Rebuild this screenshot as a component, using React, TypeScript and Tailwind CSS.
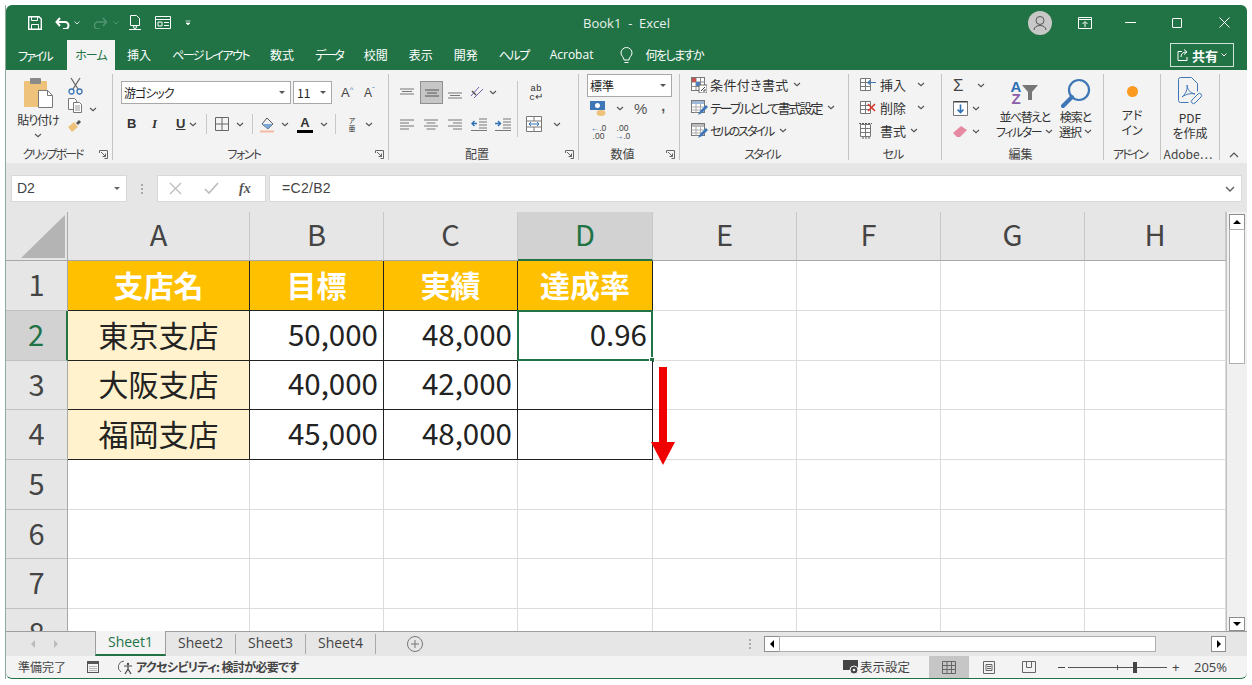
import type { ReactNode } from "react";

const JP = "font-['Noto_Sans_CJK_JP','Noto_Sans',sans-serif]";
const PALT = "[font-feature-settings:'palt']";

const Chev = ({ className = "" }: { className?: string }) => (
  <svg width="8" height="5" viewBox="0 0 8 5" className={`shrink-0 ${className}`}>
    <path d="M1 1l3 2.600L7 1" fill="none" stroke="#555" strokeWidth="1.200" />
  </svg>
);

const Launcher = () => (
  <svg width="9" height="9" viewBox="0 0 9 9" className="shrink-0">
    <path d="M.5 3V.5H8.500V8.500H5.500M2 2l4.500 4.500M6.500 3.500v3h-3" fill="none" stroke="#666" strokeWidth="1" />
  </svg>
);

function Group({
  w,
  label,
  labelClass = "",
  launcher,
  children,
}: {
  w: string;
  label: string;
  labelClass?: string;
  launcher?: boolean;
  children: ReactNode;
}) {
  return (
    <div className={`${w} shrink-0 mt-[4px] mb-[3px] border-r border-[#c4c4c4] flex flex-col`}>
      <div className="h-[72px] shrink-0">{children}</div>
      <div className="h-[14px] mt-[2px] flex items-center pr-[4px]">
        <div className={`flex-1 text-center text-[12px] leading-none text-[#444] whitespace-nowrap ${labelClass}`}>{label}</div>
        {launcher && <Launcher />}
      </div>
    </div>
  );
}

// lines for the alignment buttons
const Lines = ({ d, color = "#777" }: { d: string; color?: string }) => (
  <svg width="16" height="14" viewBox="0 0 16 14" className="shrink-0">
    <path d={d} fill="none" stroke={color} strokeWidth="1" />
  </svg>
);

const SmallIcon = ({ kind }: { kind: string }) => {
  if (kind === "cond")
    return (
      <svg width="16" height="16" viewBox="0 0 16 16" className="shrink-0">
        <rect x=".5" y=".5" width="13" height="13" fill="#fff" stroke="#777" />
        <path d="M5 .5v13M9.500 .5v13M.5 5h13M.5 9.500h13" stroke="#888" />
        <rect x="1" y="1" width="4" height="4" fill="#c8524f" />
        <rect x="5" y="5" width="4" height="4" fill="#4a7fc1" />
        <rect x="8" y="8" width="8" height="8" fill="#fff" stroke="#666" />
        <path d="M10 14l4-4M12 14h2v-2" stroke="#444" fill="none" />
      </svg>
    );
  if (kind === "table" || kind === "cell")
    return (
      <svg width="17" height="16" viewBox="0 0 17 16" className="shrink-0">
        <rect x=".5" y=".5" width="13" height="12" fill="#fff" stroke="#777" />
        <rect x="1" y="1" width="12" height="3" fill={kind === "table" ? "#9db7d8" : "#bbb"} />
        <path d="M.5 7h13M.5 10h13M5 4v9M9.500 4v9" stroke="#aaa" />
        <path d="M7 15l2-4 6-6 2 2-6 6z" fill="#3f76b5" />
      </svg>
    );
  if (kind === "ins" || kind === "del" || kind === "fmt")
    return (
      <svg width="17" height="16" viewBox="0 0 17 16" className="shrink-0">
        <path d="M1.500 1.500h10v12h-10zM1.500 5.500h10M1.500 9.500h10M6.500 1.500v12" fill="#fff" stroke="#777" />
        {kind === "ins" && <path d="M9 5.500h8M11 3.500l-2 2 2 2" fill="none" stroke="#3f76b5" strokeWidth="1.200" />}
        {kind === "del" && <path d="M9 4l7 7M16 4l-7 7" stroke="#d9342b" strokeWidth="1.600" />}
        {kind === "fmt" && <path d="M0 .5h13M3 15h8" stroke="#555" strokeDasharray="2 1" />}
      </svg>
    );
  return null;
};

function Ribbon() {
  const textRow = "flex items-center h-[23px] text-[13px] leading-none text-[#333] whitespace-nowrap";
  return (
    <div className={`h-[93px] bg-[#f3f3f3] flex shrink-0 ${PALT}`}>
      {/* clipboard */}
      <Group w="w-[107px]" label="クリップボード" labelClass="tracking-[-2px]" launcher>
        <div className="flex pl-[10px] h-full">
          <div className="w-[44px] flex flex-col items-center">
            <svg width="32" height="32" viewBox="0 0 32 32" className="mt-[3px] ml-[2px]">
              <rect x="1" y="4" width="23" height="26" rx="1" fill="#eec27a" />
              <rect x="7" y="1" width="11" height="6" rx="1" fill="#8a8a8a" />
              <path d="M15.500 13.500h9l5 5v12h-14z" fill="#fff" stroke="#777" />
              <path d="M24.500 13.500v5h5" fill="none" stroke="#777" />
            </svg>
            <div className="text-[12px] tracking-[-1px] leading-none mt-[5px] text-[#333] whitespace-nowrap">貼り付け</div>
            <Chev className="mt-[7px]" />
          </div>
          <div className="flex flex-col items-center w-[20px] ml-[5px]">
            <svg width="15" height="18" viewBox="0 0 15 18" className="mt-[3px]">
              <path d="M3 1l7 11M12 1L5 12" stroke="#666" strokeWidth="1.300" />
              <circle cx="3.500" cy="14.500" r="2.500" fill="none" stroke="#3f76b5" strokeWidth="1.300" />
              <circle cx="11.500" cy="14.500" r="2.500" fill="none" stroke="#3f76b5" strokeWidth="1.300" />
            </svg>
            <svg width="14" height="15" viewBox="0 0 14 15" className="mt-[3px]">
              <path d="M.5.5h6l2 2v9h-8z" fill="#fff" stroke="#777" />
              <path d="M5.500 4.500h6l2 2v8h-8z" fill="#fff" stroke="#777" />
              <path d="M7 8h5M7 10h5M7 12h5" stroke="#999" />
            </svg>
            <svg width="16" height="13" viewBox="0 0 16 13" className="mt-[6px]">
              <path d="M1 8l6-5 4 5-6 5z" fill="#eec27a" />
              <path d="M9 4l3-3 2 2-3 3z" fill="#555" />
            </svg>
          </div>
          <Chev className="ml-[4px] mt-[33px]" />
        </div>
      </Group>

      {/* font */}
      <Group w="w-[276px]" label="フォント" labelClass="tracking-[-1.500px]" launcher>
        <div className="pl-[8px] pt-[7px]">
          <div className="flex items-center">
            <div className="w-[170px] h-[23px] bg-white border border-[#a8a8a8] flex items-center justify-between pl-[2px] pr-[5px] text-[12px] tracking-[-1px] text-[#222]">
              游ゴシック
              <span className="w-0 h-0 border-x-[3px] border-x-transparent border-t-[3px] border-t-[#555]" />
            </div>
            <div className="ml-[2px] w-[39px] h-[23px] bg-white border border-[#a8a8a8] flex items-center justify-between pl-[3px] pr-[5px] text-[12px] text-[#222]">
              11
              <span className="w-0 h-0 border-x-[3px] border-x-transparent border-t-[3px] border-t-[#555]" />
            </div>
            <span className="ml-[9px] w-[14px] text-[13px] font-['Liberation_Sans'] text-[#444] relative">
              A<sup className="text-[8px] text-[#3f76b5] -top-[5px]">^</sup>
            </span>
            <span className="ml-[9px] w-[14px] text-[12px] font-['Liberation_Sans'] text-[#444]">
              A<sup className="text-[8px] text-[#3f76b5] -top-[5px]">ˇ</sup>
            </span>
          </div>
          <div className="flex items-center h-[24px] mt-[8px] font-['Liberation_Sans'] text-[#333] text-[13px]">
            <span className="w-[10px] ml-[6px] font-bold">B</span>
            <span className="w-[10px] ml-[15px] italic font-bold font-['Liberation_Serif']">I</span>
            <span className="w-[10px] ml-[14px] font-bold underline">U</span>
            <Chev className="ml-[3px]" />
            <div className="w-px h-[20px] bg-[#c8c8c8] ml-[9px]" />
            <svg width="14" height="14" viewBox="0 0 14 14" className="ml-[8px]">
              <path d="M.5.5h13v13H.5zM7 .5v13M.5 7h13" fill="none" stroke="#666" />
            </svg>
            <Chev className="ml-[7px]" />
            <div className="w-px h-[20px] bg-[#c8c8c8] ml-[8px]" />
            <svg width="16" height="17" viewBox="0 0 16 17" className="ml-[7px]">
              <path d="M7 2l6 6-5 5-6-5z" fill="none" stroke="#555" />
              <path d="M2 8h11l-5 5z" fill="#7aa7d6" />
              <rect x="0" y="14.500" width="14" height="2" fill="#f6b9a4" />
            </svg>
            <Chev className="ml-[5px]" />
            <div className="w-[16px] ml-[8px] flex flex-col items-center leading-none">
              <span className="text-[13px] leading-[13px] font-bold">A</span>
              <span className="w-[16px] h-[3px] bg-black mt-[1px]" />
            </div>
            <Chev className="ml-[7px]" />
            <div className="w-px h-[20px] bg-[#c8c8c8] ml-[7px]" />
            <span className={`ml-[11px] w-[10px] text-[7px] leading-[8px] text-center ${JP}`}>ア<br />亜</span>
            <Chev className="ml-[8px]" />
          </div>
        </div>
      </Group>

      {/* alignment */}
      <Group w="w-[190px]" label="配置" launcher>
        <div className="flex pt-[7px] pl-[10px]">
          <div className="w-[118px]">
            <div className="flex items-center h-[23px]">
              <Lines d="M1 3h14M3 5.500h10M1 8h14" />
              <div className="ml-[5px] w-[23px] h-[23px] bg-[#c6c6c6] border border-[#8f8f8f] flex items-center justify-center">
                <Lines d="M1 4h14M3 7h10M1 10h14" color="#555" />
              </div>
              <div className="ml-[4px]"><Lines d="M1 7h14M3 9.500h10M1 12h14" /></div>
              <svg width="16" height="15" viewBox="0 0 16 15" className="ml-[6px]">
                <path d="M2 11l8-9M5 13l9-9" stroke="#7a5fa8" strokeWidth="1" />
                <path d="M3 6l4 4" stroke="#555" strokeWidth="1.500" />
              </svg>
              <Chev className="ml-[4px]" />
            </div>
            <div className="flex items-center h-[24px] mt-[8px] gap-[8px]">
              <Lines d="M1 3h14M1 6h9M1 9h14M1 12h9" />
              <Lines d="M1 3h14M3.500 6h9M1 9h14M3.500 12h9" />
              <Lines d="M1 3h14M6 6h9M1 9h14M6 12h9" />
              <svg width="16" height="14" viewBox="0 0 16 14"><path d="M8 2h8M8 5h8M8 8h8M8 11h8M0 13.500h16" stroke="#777" /><path d="M6 6.500H1M3.500 4l-2.500 2.500L3.500 9" fill="none" stroke="#2f6fb5" strokeWidth="1.400" /></svg>
              <svg width="16" height="14" viewBox="0 0 16 14"><path d="M8 2h8M8 5h8M8 8h8M8 11h8M0 13.500h16" stroke="#777" /><path d="M0 6.500h5M3 4l2.500 2.500L3 9" fill="none" stroke="#2f6fb5" strokeWidth="1.400" /></svg>
            </div>
          </div>
          <div className="w-px h-[56px] bg-[#c8c8c8]" />
          <div className="pl-[8px]">
            <div className="h-[23px] pt-[3px] w-[20px] text-center font-['Liberation_Mono'] text-[9.500px] leading-[9px] text-[#333]">
              ab<br />c↵
            </div>
            <div className="flex items-center h-[24px] mt-[8px]">
              <svg width="16" height="16" viewBox="0 0 16 16">
                <path d="M.5.5h15v15H.5zM.5 5h15M.5 11h15M8 .5V5M8 11v4.500" fill="#fff" stroke="#777" />
                <path d="M3 8h10M5 6l-2 2 2 2M11 6l2 2-2 2" fill="none" stroke="#2f6fb5" />
              </svg>
              <Chev className="ml-[11px]" />
            </div>
          </div>
        </div>
      </Group>

      {/* number */}
      <Group w="w-[101px]" label="数値" launcher>
        <div className="pl-[8px]">
          <div className="w-[85px] h-[23px] bg-white border border-[#a8a8a8] flex items-center justify-between pl-[2px] pr-[5px] text-[12px] text-[#222]">
            標準
            <span className="w-0 h-0 border-x-[3px] border-x-transparent border-t-[3px] border-t-[#555]" />
          </div>
          <div className="flex items-center h-[23px] pl-[3px]">
            <svg width="17" height="17" viewBox="0 0 17 17">
              <rect x="0" y="1" width="15" height="9" fill="#3f76b5" />
              <circle cx="7.500" cy="5.500" r="2.500" fill="#fff" />
              <ellipse cx="11" cy="13" rx="4.500" ry="3" fill="#eec27a" />
            </svg>
            <Chev className="ml-[9px]" />
            <span className="ml-[10px] text-[15px] leading-none font-['Liberation_Sans'] text-[#555]">%</span>
            <span className="ml-[14px] text-[14px] leading-none font-bold font-['Liberation_Sans'] text-[#555] -mt-[6px]">,</span>
          </div>
          <div className="flex items-center h-[23px] pl-[3px] font-['Liberation_Sans'] text-[8.500px] leading-[8px] text-[#444] text-center">
            <span className="w-[17px]"><span className="text-[#2f6fb5]">←</span>.0<br />.00</span>
            <span className="w-[17px] ml-[7px]">.00<br /><span className="text-[#2f6fb5]">→</span>.0</span>
          </div>
        </div>
      </Group>

      {/* styles */}
      <Group w="w-[169px]" label="スタイル" labelClass="tracking-[-2px]">
        <div className="pl-[11px] -mt-px">
          <div className={textRow}><SmallIcon kind="cond" /><span className="ml-[3px] tracking-[0.4px]">条件付き書式</span><Chev className="ml-[4px]" /></div>
          <div className={textRow}><SmallIcon kind="table" /><span className="ml-[2px] tracking-[-2px]">テーブルとして書式設定</span><Chev className="ml-[6px]" /></div>
          <div className={textRow}><SmallIcon kind="cell" /><span className="ml-[2px] text-[12px] tracking-[-2px]">セルのスタイル</span><Chev className="ml-[6px]" /></div>
        </div>
      </Group>

      {/* cells */}
      <Group w="w-[93px]" label="セル" labelClass="tracking-[-1px]">
        <div className="pl-[10px] -mt-px">
          <div className={textRow}><SmallIcon kind="ins" /><span className="ml-[4px] w-[37px]">挿入</span><Chev /></div>
          <div className={textRow}><SmallIcon kind="del" /><span className="ml-[4px] w-[37px]">削除</span><Chev /></div>
          <div className={textRow}><SmallIcon kind="fmt" /><span className="ml-[4px]">書式</span><Chev className="ml-[4px]" /></div>
        </div>
      </Group>

      {/* editing */}
      <Group w="w-[162px]" label="編集">
        <div className="flex">
          <div className="w-[56px] pl-[11px]">
            <div className="flex items-center h-[23px]">
              <span className="w-[15px] text-[17px] leading-none font-['Liberation_Sans'] text-[#444]">Σ</span>
              <Chev className="ml-[9px]" />
            </div>
            <div className="flex items-center h-[23px]">
              <svg width="15" height="15" viewBox="0 0 15 15">
                <path d="M.5.5h14v14H.5z" fill="#fff" stroke="#777" />
                <path d="M.5.500h14" stroke="#444" strokeWidth="2" />
                <path d="M7.500 3.500v8M4.500 8.500l3 3 3-3" fill="none" stroke="#2f6fb5" strokeWidth="1.600" />
              </svg>
              <Chev className="ml-[4px]" />
            </div>
            <div className="flex items-center h-[23px]">
              <svg width="15" height="13" viewBox="0 0 15 13"><path d="M0 8l8-7 6 4-7 7H4z" fill="#e58aa0" /></svg>
              <Chev className="ml-[4px]" />
            </div>
          </div>
          <div className="w-[53px] flex flex-col items-center">
            <div className="flex h-[33px] items-center mt-[2px]">
              <span className={`text-[15px] leading-[12px] font-bold font-['Liberation_Sans'] text-center`}>
                <span className="text-[#2f6fb5]">A</span>
                <br />
                <span className="text-[#8a5ea8]">Z</span>
              </span>
              <svg width="16" height="15" viewBox="0 0 16 15" className="ml-[1px]"><path d="M0 0h16L10 7v8H6V7z" fill="#777" /></svg>
            </div>
            <div className="text-[12px] leading-[15px] text-[#333] whitespace-nowrap text-center flex flex-col items-center tracking-[-1.500px]">
              <span>並べ替えと</span>
              <span className="flex items-center">フィルター<Chev className="ml-[4px]" /></span>
            </div>
          </div>
          <div className="w-[49px] flex flex-col items-center">
            <svg width="30" height="31" viewBox="0 0 30 31" className="mt-[4px]">
              <circle cx="18" cy="12" r="10" fill="none" stroke="#3f76b5" strokeWidth="2.200" />
              <path d="M11 19L2 28" stroke="#3f76b5" strokeWidth="4" strokeLinecap="round" />
            </svg>
            <div className="text-[12px] leading-[15px] text-[#333] whitespace-nowrap text-center flex flex-col items-center tracking-[-1px]">
              <span>検索と</span>
              <span className="flex items-center">選択<Chev className="ml-[3px]" /></span>
            </div>
          </div>
        </div>
      </Group>

      {/* add-in */}
      <Group w="w-[57px]" label="アドイン" labelClass="tracking-[-2px]">
        <div className="flex flex-col items-center">
          <div className="w-[11px] h-[11px] rounded-full bg-[#fb9a1f] mt-[12px]" />
          <div className="text-[12px] leading-[15px] text-center text-[#333] mt-[10px]">
            アド
            <br />
            イン
          </div>
        </div>
      </Group>

      {/* adobe */}
      <Group w="w-[59px]" label="Adobe…">
        <div className="flex flex-col items-center">
          <svg width="26" height="30" viewBox="0 0 26 30" className="mt-[3px]">
            <path d="M1.500 2.500a2 2 0 012-2h11l6 6v8M1.500 2.500v21a2 2 0 002 2h8" fill="none" stroke="#3f76b5" />
            <path d="M5 20c4-3 6-9 5-12 0 4 3 8 8 9-4-1-9 0-13 3z" fill="none" stroke="#3f76b5" />
            <path d="M15 23l6-6a2 2 0 013 3l-6 6a2 2 0 01-3-3z" fill="none" stroke="#3f76b5" />
          </svg>
          <div className="text-[12px] leading-[15px] text-center text-[#333] mt-[3px] whitespace-nowrap">
            PDF
            <br />
            を作成
          </div>
        </div>
      </Group>

      <div className="flex-1 flex items-end justify-center pb-[5px]">
        <svg width="10" height="6" viewBox="0 0 10 6"><path d="M1 5l4-4 4 4" fill="none" stroke="#555" strokeWidth="1.200" /></svg>
      </div>
    </div>
  );
}

function TitleBar() {
  const tabs = [
    { t: "挿入", c: "" },
    { t: "ページ レイアウト", c: "tracking-[-1.500px]" },
    { t: "数式", c: "" },
    { t: "データ", c: "tracking-[-2px]" },
    { t: "校閲", c: "" },
    { t: "表示", c: "" },
    { t: "開発", c: "" },
    { t: "ヘルプ", c: "tracking-[-1.500px]" },
    { t: "Acrobat", c: "font-['Open_Sans',sans-serif]" },
  ];
  return (
    <div className={`bg-[#217346] text-white shrink-0 rounded-tl-[6px] rounded-tr-[6px] ${PALT}`}>
      <div className="h-[35px] grid grid-cols-[1fr_auto_1fr] items-center">
        <div className="flex items-center pl-[22px]">
          <svg width="14" height="14" viewBox="0 0 14 14">
            <path d="M.7.7h10.300L13.300 3v10.300H.7z" fill="none" stroke="#fff" strokeWidth="1.400" />
            <path d="M3.500 1v3.500h6V1M3.500 13V8.500h7V13" fill="none" stroke="#fff" />
          </svg>
          <svg width="15" height="13" viewBox="0 0 15 13" className="ml-[13px]">
            <path d="M2 6h8a3.500 3.500 0 010 7H8M5 2L1.500 6 5 10" fill="none" stroke="#fff" strokeWidth="2" />
          </svg>
          <svg width="6" height="4" viewBox="0 0 6 4" className="ml-[4px]"><path d="M.5.5L3 3 5.500.5" fill="none" stroke="#cfe3d8" /></svg>
          <svg width="15" height="13" viewBox="0 0 15 13" className="ml-[13px]">
            <path d="M13 6H5a3.500 3.500 0 000 7h2M10 2l3.500 4L10 10" fill="none" stroke="#4f9470" strokeWidth="1.600" />
          </svg>
          <svg width="6" height="4" viewBox="0 0 6 4" className="ml-[5px]"><path d="M.5.5L3 3 5.500.5" fill="none" stroke="#4f9470" /></svg>
          <svg width="12" height="15" viewBox="0 0 12 15" className="ml-[10px]">
            <path d="M1.500.5h6l3 3v7h-9z" fill="none" stroke="#fff" />
            <path d="M0 14.500h12" stroke="#fff" />
            <circle cx="6" cy="12" r="1.500" fill="none" stroke="#fff" />
          </svg>
          <svg width="16" height="13" viewBox="0 0 16 13" className="ml-[14px]">
            <path d="M.5.500h15v12H.5zM.5 3.500h15M3 6h4v4H3zM9 6.500h5M9 9.500h5" fill="none" stroke="#fff" />
          </svg>
          <svg width="6" height="6" viewBox="0 0 6 6" className="ml-[14px]"><path d="M.5 1h5M1 3l2 2 2-2z" fill="#fff" stroke="#fff" strokeWidth=".7" /></svg>
        </div>
        <div className="font-['Open_Sans',sans-serif] text-[13px] text-[#e8f1ec] mt-[2px] whitespace-pre">Book1  -  Excel</div>
        <div className="flex items-center justify-end">
          <div className="w-[24px] h-[24px] rounded-full bg-[#c8c8c8] flex items-center justify-center mr-[26px] mt-[1px]">
            <svg width="14" height="16" viewBox="0 0 14 16">
              <circle cx="7" cy="5.500" r="4" fill="none" stroke="#555" />
              <path d="M1 15c0-6 12-6 12 0" fill="none" stroke="#555" />
            </svg>
          </div>
          <svg width="14" height="12" viewBox="0 0 14 12" className="mr-[33px]">
            <path d="M.5.5h13v11H.5zM.5 2.500h13M7 10V5M4.500 7L7 4.500 9.500 7" fill="none" stroke="#fff" />
          </svg>
          <div className="w-[11px] h-px bg-white mr-[36px]" />
          <div className="w-[10px] h-[10px] border border-white rounded-[1px] mr-[37px]" />
          <svg width="11" height="11" viewBox="0 0 11 11" className="mr-[17px]"><path d="M.5.5l10 10M10.500.5l-10 10" stroke="#fff" /></svg>
        </div>
      </div>
      <div className="h-[30px] flex items-end text-[12px] leading-none pl-[12px] whitespace-nowrap">
        <div className="h-[30px] w-[49px] flex items-center text-[12px] tracking-[-2px] pt-[1px]">ファイル</div>
        <div className="h-[30px] w-[48px] bg-[#f3f3f3] text-[#217346] tracking-[-1px] flex items-center justify-center">ホーム</div>
        <div className="h-[30px] ml-[12px] flex items-center gap-[21px]">
          {tabs.map(({ t, c }) => (
            <span key={t} className={c}>
              {t}
            </span>
          ))}
        </div>
        <div className="h-[30px] flex items-center ml-[27px]">
          <svg width="13" height="17" viewBox="0 0 13 17">
            <path d="M4 13c0-3-3-4-3-7a5.500 5.500 0 0111 0c0 3-3 4-3 7zM4.500 15.500h4" fill="none" stroke="#fff" />
          </svg>
          <span className="ml-[12px] tracking-[-1.500px]">何をしますか</span>
        </div>
        <div className="flex-1" />
        <div className="h-[24px] w-[64px] mb-[3px] mr-[13px] border border-[#cfe3d8] flex items-center justify-center">
          <svg width="12" height="12" viewBox="0 0 12 12"><path d="M5 2.500H1v9h9V8M4 8c0-3 2-5 5-5M7 .5l3 2.500-3 2.500" fill="none" stroke="#fff" /></svg>
          <span className="ml-[3px] font-bold text-[13px]">共有</span>
          <svg width="6" height="4" viewBox="0 0 6 4" className="ml-[3px]"><path d="M.5.5L3 3 5.500.5" fill="none" stroke="#fff" /></svg>
        </div>
      </div>
    </div>
  );
}

function FormulaBar() {
  return (
    <div className="h-[49px] bg-[#e6e6e6] shrink-0 flex pt-[12px] pb-[10px] pl-[5px] pr-[5px]">
      <div className="w-[116px] bg-white border border-[#d8d8d8] flex items-center justify-between pl-[5px] pr-[6px] font-['Liberation_Sans'] text-[14px] text-[#444]">
        D2
        <span className="w-0 h-0 border-x-[3px] border-x-transparent border-t-[3px] border-t-[#666]" />
      </div>
      <div className="w-[30px] flex items-center justify-center">
        <div className="flex flex-col gap-[2px]">
          <span className="w-[2px] h-[2px] bg-[#aaa]" />
          <span className="w-[2px] h-[2px] bg-[#aaa]" />
          <span className="w-[2px] h-[2px] bg-[#aaa]" />
        </div>
      </div>
      <div className="w-[109px] bg-white border border-[#d8d8d8] flex items-center pl-[11px]">
        <svg width="13" height="13" viewBox="0 0 13 13"><path d="M1 1l11 11M12 1L1 12" stroke="#bbb" strokeWidth="1.200" /></svg>
        <svg width="15" height="13" viewBox="0 0 15 13" className="ml-[22px]"><path d="M1 7l4 4 9-10" fill="none" stroke="#bbb" strokeWidth="1.600" /></svg>
        <span className="ml-[20px] italic font-bold font-['Liberation_Serif'] text-[14px] text-[#555]">fx</span>
      </div>
      <div className="ml-[3px] flex-1 bg-white border border-[#d8d8d8] flex items-center justify-between pl-[12px] pr-[6px] font-['Liberation_Sans'] text-[14px] text-[#444] tracking-[0.3px]">
        =C2/B2
        <svg width="10" height="6" viewBox="0 0 10 6"><path d="M1 1l4 4 4-4" fill="none" stroke="#666" strokeWidth="1.500" /></svg>
      </div>
    </div>
  );
}

const COLS = ["A", "B", "C", "D", "E", "F", "G", "H"];
const COL_W = ["w-[182px]", "w-[134px]", "w-[134px]", "w-[135px]", "w-[144px]", "w-[144px]", "w-[144px]", "w-[141px]"];
const ROWS = [
  { h: "h-[50px]", n: "1" },
  { h: "h-[50px]", n: "2" },
  { h: "h-[49px]", n: "3" },
  { h: "h-[50px]", n: "4" },
  { h: "h-[50px]", n: "5" },
  { h: "h-[49px]", n: "6" },
  { h: "h-[50px]", n: "7" },
  { h: "h-[50px]", n: "8" },
];
const TABLE = [
  ["支店名", "目標", "実績", "達成率"],
  ["東京支店", "50,000", "48,000", "0.96"],
  ["大阪支店", "40,000", "42,000", ""],
  ["福岡支店", "45,000", "48,000", ""],
];

function Sheet() {
  return (
    <div className="flex flex-1 min-h-0 bg-[#e6e6e6]">
      <div className={`relative flex-1 min-w-0 overflow-hidden bg-white ${JP}`}>
        {/* column headers */}
        <div className="flex h-[49px] bg-[#e6e6e6]">
          <div className="w-[62px] shrink-0 border-r border-b border-[#a8a8a8] flex items-end justify-end pr-[2px] pb-[2px]">
            <div className="w-0 h-0 border-l-[44px] border-l-transparent border-b-[43px] border-b-[#b4b4b4]" />
          </div>
          {COLS.map((c, i) => (
            <div
              key={c}
              className={`${COL_W[i]} shrink-0 border-r border-[#c8c8c8] flex items-center justify-center text-[29px] leading-none pb-[5px] ${
                c === "D" ? "bg-[#d2d2d2] text-[#217346] border-b-2 border-b-[#217346]" : "text-[#444] border-b border-b-[#a8a8a8]"
              }`}
            >
              {c}
            </div>
          ))}
        </div>

        {/* rows */}
        {ROWS.map((row, r) => (
          <div key={row.n} className={`flex ${row.h}`}>
            <div
              className={`w-[62px] shrink-0 flex items-center justify-center text-[29px] leading-none pb-[4px] border-b border-[#c0c0c0] ${
                r === 1 ? "bg-[#d2d2d2] text-[#217346] border-r-2 border-r-[#217346]" : "bg-[#e6e6e6] text-[#444] border-r border-r-[#a8a8a8]"
              }`}
            >
              {row.n}
            </div>
            {COLS.map((c, i) => {
              if (r > 3 || i > 3) {
                return <div key={c} className={`${COL_W[i]} shrink-0 border-r border-b border-[#dcdcdc]`} />;
              }
              const val = TABLE[r][i];
              const head = r === 0;
              return (
                <div
                  key={c}
                  className={`${COL_W[i]} shrink-0 relative flex items-center border-r border-b border-[#222] text-[29.500px] leading-none pb-[4px] ${
                    head
                      ? "bg-[#ffc000] text-white font-bold justify-center text-[30px]"
                      : i === 0
                        ? "bg-[#fff2cc] text-[#222] justify-center text-[30px]"
                        : "bg-white text-[#222] justify-end pr-[5px]"
                  }`}
                >
                  {val}
                  {r === 1 && i === 3 && (
                    <div className="absolute -left-px -top-px -right-px -bottom-px border-2 border-[#217346]">
                      <div className="absolute -right-[4px] -bottom-[4px] w-[6px] h-[6px] bg-[#217346] border border-white" />
                    </div>
                  )}
                </div>
              );
            })}
          </div>
        ))}

        {/* red arrow */}
        <svg width="26" height="99" viewBox="0 0 26 99" className="absolute left-[645px] top-[155px]">
          <rect x="8" y="0" width="8" height="75" fill="#f00000" />
          <path d="M0 75h24L12 98z" fill="#f00000" />
        </svg>
      </div>

      {/* vertical scrollbar */}
      <div className="w-[21px] shrink-0 bg-[#f0f0f0] border-l border-[#c0c0c0] flex flex-col items-center pt-[2px]">
        <div className="w-[16px] h-[16px] bg-white border border-[#8e8e8e] flex items-center justify-center">
          <span className="w-0 h-0 border-x-[4px] border-x-transparent border-b-[4px] border-b-black" />
        </div>
        <div className="w-[16px] h-[135px] bg-white border border-[#b0b0b0] -mt-px" />
        <div className="flex-1" />
        <div className="w-[16px] h-[14px] bg-white border border-[#8e8e8e] flex items-center justify-center">
          <span className="w-0 h-0 border-x-[4px] border-x-transparent border-t-[4px] border-t-black" />
        </div>
      </div>
    </div>
  );
}

function TabsBar() {
  return (
    <div className="h-[25px] shrink-0 bg-[#e6e6e6] border-t border-[#9e9e9e] flex items-stretch font-['Open_Sans',sans-serif] text-[14px] leading-none text-[#444]">
      <div className="w-[89px] flex items-center pl-[25px] gap-[19px] shrink-0">
        <span className="w-0 h-0 border-y-[4px] border-y-transparent border-r-[4px] border-r-[#bbb]" />
        <span className="w-0 h-0 border-y-[4px] border-y-transparent border-l-[4px] border-l-[#bbb]" />
      </div>
      <div className="w-[71px] -mt-px bg-[#f3f3f3] border-x border-[#9e9e9e] border-b-2 border-b-[#217346] text-[#217346] flex items-center justify-center pb-[2px]">
        Sheet1
      </div>
      {["Sheet2", "Sheet3", "Sheet4"].map((s) => (
        <div key={s} className="w-[70px] my-[2px] border-r border-[#aaa] flex items-center justify-center pb-[2px]">
          {s}
        </div>
      ))}
      <div className="w-[78px] flex items-center justify-center">
        <svg width="16" height="16" viewBox="0 0 16 16"><circle cx="8" cy="8" r="7.500" fill="none" stroke="#777" /><path d="M8 4v8M4 8h8" stroke="#777" /></svg>
      </div>
      <div className="flex-1 flex items-center justify-end">
        <div className="flex flex-col gap-[2px] mr-[13px]">
          <span className="w-[2px] h-[2px] bg-[#aaa]" />
          <span className="w-[2px] h-[2px] bg-[#aaa]" />
          <span className="w-[2px] h-[2px] bg-[#aaa]" />
        </div>
        <div className="w-[462px] h-[16px] flex">
          <div className="w-[16px] bg-white border border-[#8e8e8e] flex items-center justify-center shrink-0">
            <span className="w-0 h-0 border-y-[4px] border-y-transparent border-r-[4px] border-r-black" />
          </div>
          <div className="w-[377px] bg-white border border-[#b0b0b0] -ml-px" />
          <div className="flex-1" />
          <div className="w-[15px] bg-white border border-[#8e8e8e] flex items-center justify-center shrink-0">
            <span className="w-0 h-0 border-y-[4px] border-y-transparent border-l-[4px] border-l-black" />
          </div>
        </div>
        <div className="w-[21px]" />
      </div>
    </div>
  );
}

function StatusBar() {
  return (
    <div className={`h-[23px] shrink-0 bg-[#f3f3f3] border-b border-[#217346] rounded-b-[6px] flex items-center text-[12px] leading-none text-[#444] whitespace-nowrap ${PALT}`}>
      <span className="ml-[12px]">準備完了</span>
      <svg width="12" height="12" viewBox="0 0 12 12" className="ml-[21px]">
        <rect x=".5" y="2.500" width="11" height="9" fill="none" stroke="#555" />
        <rect x="0" y="0" width="12" height="3" fill="#555" />
        <path d="M2.500 5.500h7M2.500 7.500h7M2.500 9.500h7" stroke="#777" strokeDasharray="1 1" />
      </svg>
      <svg width="17" height="15" viewBox="0 0 17 15" className="ml-[19px]">
        <path d="M6 1a6 6 0 00-3 11" fill="none" stroke="#666" />
        <circle cx="10" cy="4" r="1.200" fill="#444" />
        <path d="M6 6h8M10 6v3M7 14l3-5 3 5" fill="none" stroke="#444" strokeWidth="1.200" />
      </svg>
      <span className="ml-[1px] font-bold text-[12px] tracking-[-0.650px]">アクセシビリティ: 検討が必要です</span>
      <div className="flex-1" />
      <svg width="17" height="15" viewBox="0 0 17 15">
        <rect x="0" y="0" width="15" height="10" fill="#444" />
        <circle cx="11" cy="10" r="4" fill="#444" stroke="#f3f3f3" />
        <circle cx="11" cy="10" r="1.300" fill="#f3f3f3" />
      </svg>
      <span className="text-[12.500px]">表示設定</span>
      <div className="ml-[19px] w-[40px] h-full bg-[#c6c6c6] flex items-center justify-center">
        <svg width="14" height="13" viewBox="0 0 14 13"><path d="M.5.500h13v12H.5zM.5 4.500h13M.5 8.500h13M5 .5v12M9.500 .5v12" fill="none" stroke="#666" /></svg>
      </div>
      <div className="w-[40px] flex items-center justify-center">
        <svg width="12" height="13" viewBox="0 0 12 13"><path d="M.5.500h11v12H.5zM3 3.500h6v6H3zM4 5.500h4M4 7.500h4" fill="none" stroke="#666" /></svg>
      </div>
      <div className="w-[40px] flex items-center justify-center">
        <svg width="14" height="12" viewBox="0 0 14 12"><path d="M.5.500h13v11H.5zM4.500.5v6h5v-6" fill="none" stroke="#666" /></svg>
      </div>
      <div className="ml-[9px] flex items-center w-[127px]">
        <span className="w-[7px] h-px bg-[#444]" />
        <div className="ml-[3px] w-[99px] h-px bg-[#555] relative">
          <span className="absolute left-[49px] -top-[2px] w-px h-[5px] bg-[#555]" />
          <span className="absolute left-[65px] -top-[5px] w-[4px] h-[11px] bg-[#444]" />
        </div>
        <span className="ml-[5px] text-[13px] text-[#444] font-['Liberation_Sans']">+</span>
      </div>
      <span className="ml-[9px] mr-[20px] font-['Open_Sans',sans-serif] text-[13px]">205%</span>
    </div>
  );
}

export default function App() {
  return (
    <div className={`w-[1252px] h-[685px] bg-white pt-[5px] pl-[5px] pr-[5px] pb-[6px] overflow-hidden ${JP}`}>
      <div className="w-full h-full flex flex-col border-l border-[#8fa99a]">
        <TitleBar />
        <Ribbon />
        <FormulaBar />
        <Sheet />
        <TabsBar />
        <StatusBar />
      </div>
    </div>
  );
}
